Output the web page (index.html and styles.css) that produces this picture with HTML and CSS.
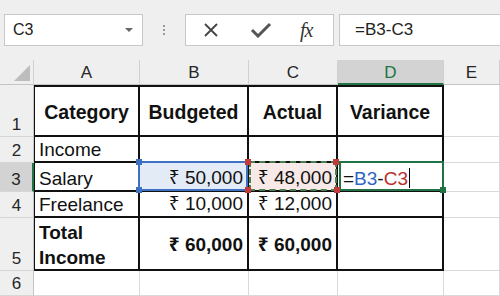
FILE: index.html
```html
<html>
    <head>
        <link rel="stylesheet" href="styles.css">
    </head>
    <body>
        <div class="toolbar">
            <div class="namebox">
                <span class="namebox-text">C3</span>
                <span class="caret"></span>
            </div>
            <div class="grip"><i></i><i></i><i></i></div>
            <div class="btnbox">
                <svg class="icon-x" width="16" height="16" viewBox="0 0 16 16">
                    <path d="M2 2 L14 14 M14 2 L2 14" stroke="#444" stroke-width="1.8" fill="none"/>
                </svg>
                <svg class="icon-check" width="22" height="16" viewBox="0 0 22 16">
                    <path d="M2 8 L8 14 L20 2" stroke="#555" stroke-width="3" fill="none"/>
                </svg>
                <span class="fx">fx</span>
            </div>
            <div class="formula">=B3-C3</div>
        </div>

        <div class="sheet">
            <!-- column headers -->
            <div class="corner"><span class="tri"></span></div>
            <div class="colhead">A</div>
            <div class="colhead">B</div>
            <div class="colhead">C</div>
            <div class="colhead colhead-active">D</div>
            <div class="colhead">E</div>

            <!-- row 1 -->
            <div class="rowhead">1</div>
            <div class="cell tb top left head">Category</div>
            <div class="cell tb top head">Budgeted</div>
            <div class="cell tb top head">Actual</div>
            <div class="cell tb top head">Variance</div>
            <div class="cell"></div>

            <!-- row 2 -->
            <div class="rowhead">2</div>
            <div class="cell tb left">Income</div>
            <div class="cell tb"></div>
            <div class="cell tb"></div>
            <div class="cell tb"></div>
            <div class="cell"></div>

            <!-- row 3 -->
            <div class="rowhead rowhead-active">3</div>
            <div class="cell tb left">Salary</div>
            <div class="cell tb num ref-b">₹ 50,000
                <span class="handle h-tl blue"></span>
                <span class="handle h-bl blue"></span>
            </div>
            <div class="cell tb num ref-c">₹ 48,000
                <span class="handle h-tl red"></span>
                <span class="handle h-bl red"></span>
                <span class="handle h-tr red"></span>
                <span class="handle h-br red"></span>
            </div>
            <div class="cell tb active">=<span class="blue-t">B3</span>-<span class="red-t">C3</span><span class="cursor"></span>
                <span class="handle h-br green"></span>
            </div>
            <div class="cell"></div>

            <!-- row 4 -->
            <div class="rowhead">4</div>
            <div class="cell tb left">Freelance</div>
            <div class="cell tb num">₹ 10,000</div>
            <div class="cell tb num">₹ 12,000</div>
            <div class="cell tb"></div>
            <div class="cell"></div>

            <!-- row 5 -->
            <div class="rowhead">5</div>
            <div class="cell tb left bold wrap">Total<br>Income</div>
            <div class="cell tb num bold mid">₹ 60,000</div>
            <div class="cell tb num bold mid">₹ 60,000</div>
            <div class="cell tb"></div>
            <div class="cell"></div>

            <!-- row 6 -->
            <div class="rowhead">6</div>
            <div class="cell"></div>
            <div class="cell"></div>
            <div class="cell"></div>
            <div class="cell"></div>
            <div class="cell"></div>
        </div>
    </body>
</html>
```

FILE: styles.css
```css
* {
    box-sizing: border-box;
}

body {
    margin: 0;
    width: 500px;
    height: 296px;
    overflow: hidden;
    font-family: "Liberation Sans", Arial, "Noto Sans", sans-serif;
    background-color: #fff;
}

/* formula bar */

.toolbar {
    height: 60px;
    display: flex;
    align-items: center;
    padding-left: 4px;
    background-color: #efefef;
}

.namebox {
    width: 139px;
    height: 32px;
    display: flex;
    align-items: center;
    justify-content: space-between;
    padding: 0 9px 0 8px;
    background-color: #fff;
    border: 1px solid #c8c8c8;
}

.namebox-text {
    font-size: 16px;
    color: #222;
}

.caret {
    width: 0;
    height: 0;
    border-left: 4px solid transparent;
    border-right: 4px solid transparent;
    border-top: 4px solid #666;
}

.grip {
    width: 42px;
    display: flex;
    flex-direction: column;
    align-items: center;
    gap: 2px;
}

.grip i {
    display: block;
    width: 2px;
    height: 2px;
    background-color: #9a9a9a;
}

.btnbox {
    width: 149px;
    height: 32px;
    display: flex;
    align-items: center;
    padding-left: 17px;
    background-color: #fff;
    border: 1px solid #c8c8c8;
}

.icon-check {
    margin-left: 31px;
}

.fx {
    margin-left: 28px;
    font-family: "Liberation Serif", "Times New Roman", serif;
    font-style: italic;
    font-size: 20px;
    color: #333;
    letter-spacing: -1px;
}

.formula {
    flex: 1;
    height: 32px;
    margin-left: 5px;
    display: flex;
    align-items: center;
    padding-left: 15px;
    font-size: 17px;
    color: #222;
    background-color: #fff;
    border: 1px solid #c8c8c8;
    border-right: none;
}

/* sheet grid */

.sheet {
    display: grid;
    grid-template-columns: 34px 106px 109px 89px 106px 1fr;
    grid-template-rows: 25px 52px 26px 29px 26px 53px 1fr;
    height: 236px;
    font-size: 19px;
    color: #111;
}

.corner {
    position: relative;
    background-color: #efefef;
    border-right: 1px solid #d0d0d0;
    border-bottom: 1px solid #c4c4c4;
}

.tri {
    position: absolute;
    right: 3px;
    bottom: 3px;
    width: 0;
    height: 0;
    border-left: 16px solid transparent;
    border-bottom: 16px solid #bdbdbd;
}

.colhead {
    display: flex;
    align-items: center;
    justify-content: center;
    padding-top: 2px;
    font-size: 17px;
    color: #262626;
    background-color: #efefef;
    border-right: 1px solid #d0d0d0;
    border-bottom: 1px solid #c4c4c4;
}

.colhead-active {
    color: #217346;
    background-color: #d3d3d3;
    border-bottom: 2px solid #217346;
}

.rowhead {
    display: flex;
    align-items: flex-end;
    justify-content: center;
    padding-bottom: 1px;
    font-size: 17px;
    color: #262626;
    background-color: #efefef;
    border-right: 1px solid #c4c4c4;
    border-bottom: 1px solid #d6d6d6;
}

.rowhead-active {
    background-color: #d3d3d3;
    border-right: 2px solid #217346;
}

.cell {
    position: relative;
    display: flex;
    align-items: flex-end;
    padding: 0 4px;
    white-space: nowrap;
    border-right: 1px solid #d9d9d9;
    border-bottom: 1px solid #d9d9d9;
}

.tb {
    border-right: 2px solid #111;
    border-bottom: 2px solid #111;
}

.tb.top {
    border-top: 2px solid #111;
}

.tb.left {
    border-left: 1px solid #111;
}

.head {
    align-items: center;
    justify-content: center;
    padding-top: 2px;
    font-weight: bold;
    font-size: 19.5px;
}

.num {
    justify-content: flex-end;
}

.mid {
    align-items: center;
}

.bold {
    font-weight: bold;
}

.wrap {
    white-space: normal;
    line-height: 25px;
    align-items: center;
    padding-top: 3px;
}

/* selection and references */

.ref-b {
    background-color: #e3ebf6;
}

.ref-b::after {
    content: "";
    position: absolute;
    top: -2px;
    left: -2px;
    right: -1px;
    bottom: -1px;
    border: 2px solid #3d72c2;
    z-index: 1;
}

.ref-c {
    background-color: #f7e9e7;
}

.ref-c::after {
    content: "";
    position: absolute;
    top: -2px;
    left: 0;
    right: -1px;
    bottom: -1px;
    border: 2px dashed #4e7f52;
    z-index: 1;
}

.active::after {
    content: "";
    position: absolute;
    top: -2px;
    left: 1px;
    right: -2px;
    bottom: -1px;
    border: 2px solid #217346;
    z-index: 1;
}

.active {
    padding-left: 5px;
}

.blue-t {
    color: #2f65c0;
}

.red-t {
    color: #b8302c;
}

.cursor {
    display: inline-block;
    align-self: center;
    width: 1px;
    height: 20px;
    margin-left: 1px;
    margin-top: 3px;
    background-color: #000;
}

.handle {
    position: absolute;
    width: 6px;
    height: 6px;
    z-index: 2;
}

.h-tl {
    top: -4px;
    left: -4px;
}

.h-bl {
    bottom: -3px;
    left: -4px;
}

.h-tr {
    top: -4px;
    right: -3px;
}

.h-br {
    bottom: -3px;
    right: -4px;
}

.blue {
    background-color: #3d72c2;
}

.red {
    background-color: #c23a3a;
}

.green {
    background-color: #217346;
}
```
